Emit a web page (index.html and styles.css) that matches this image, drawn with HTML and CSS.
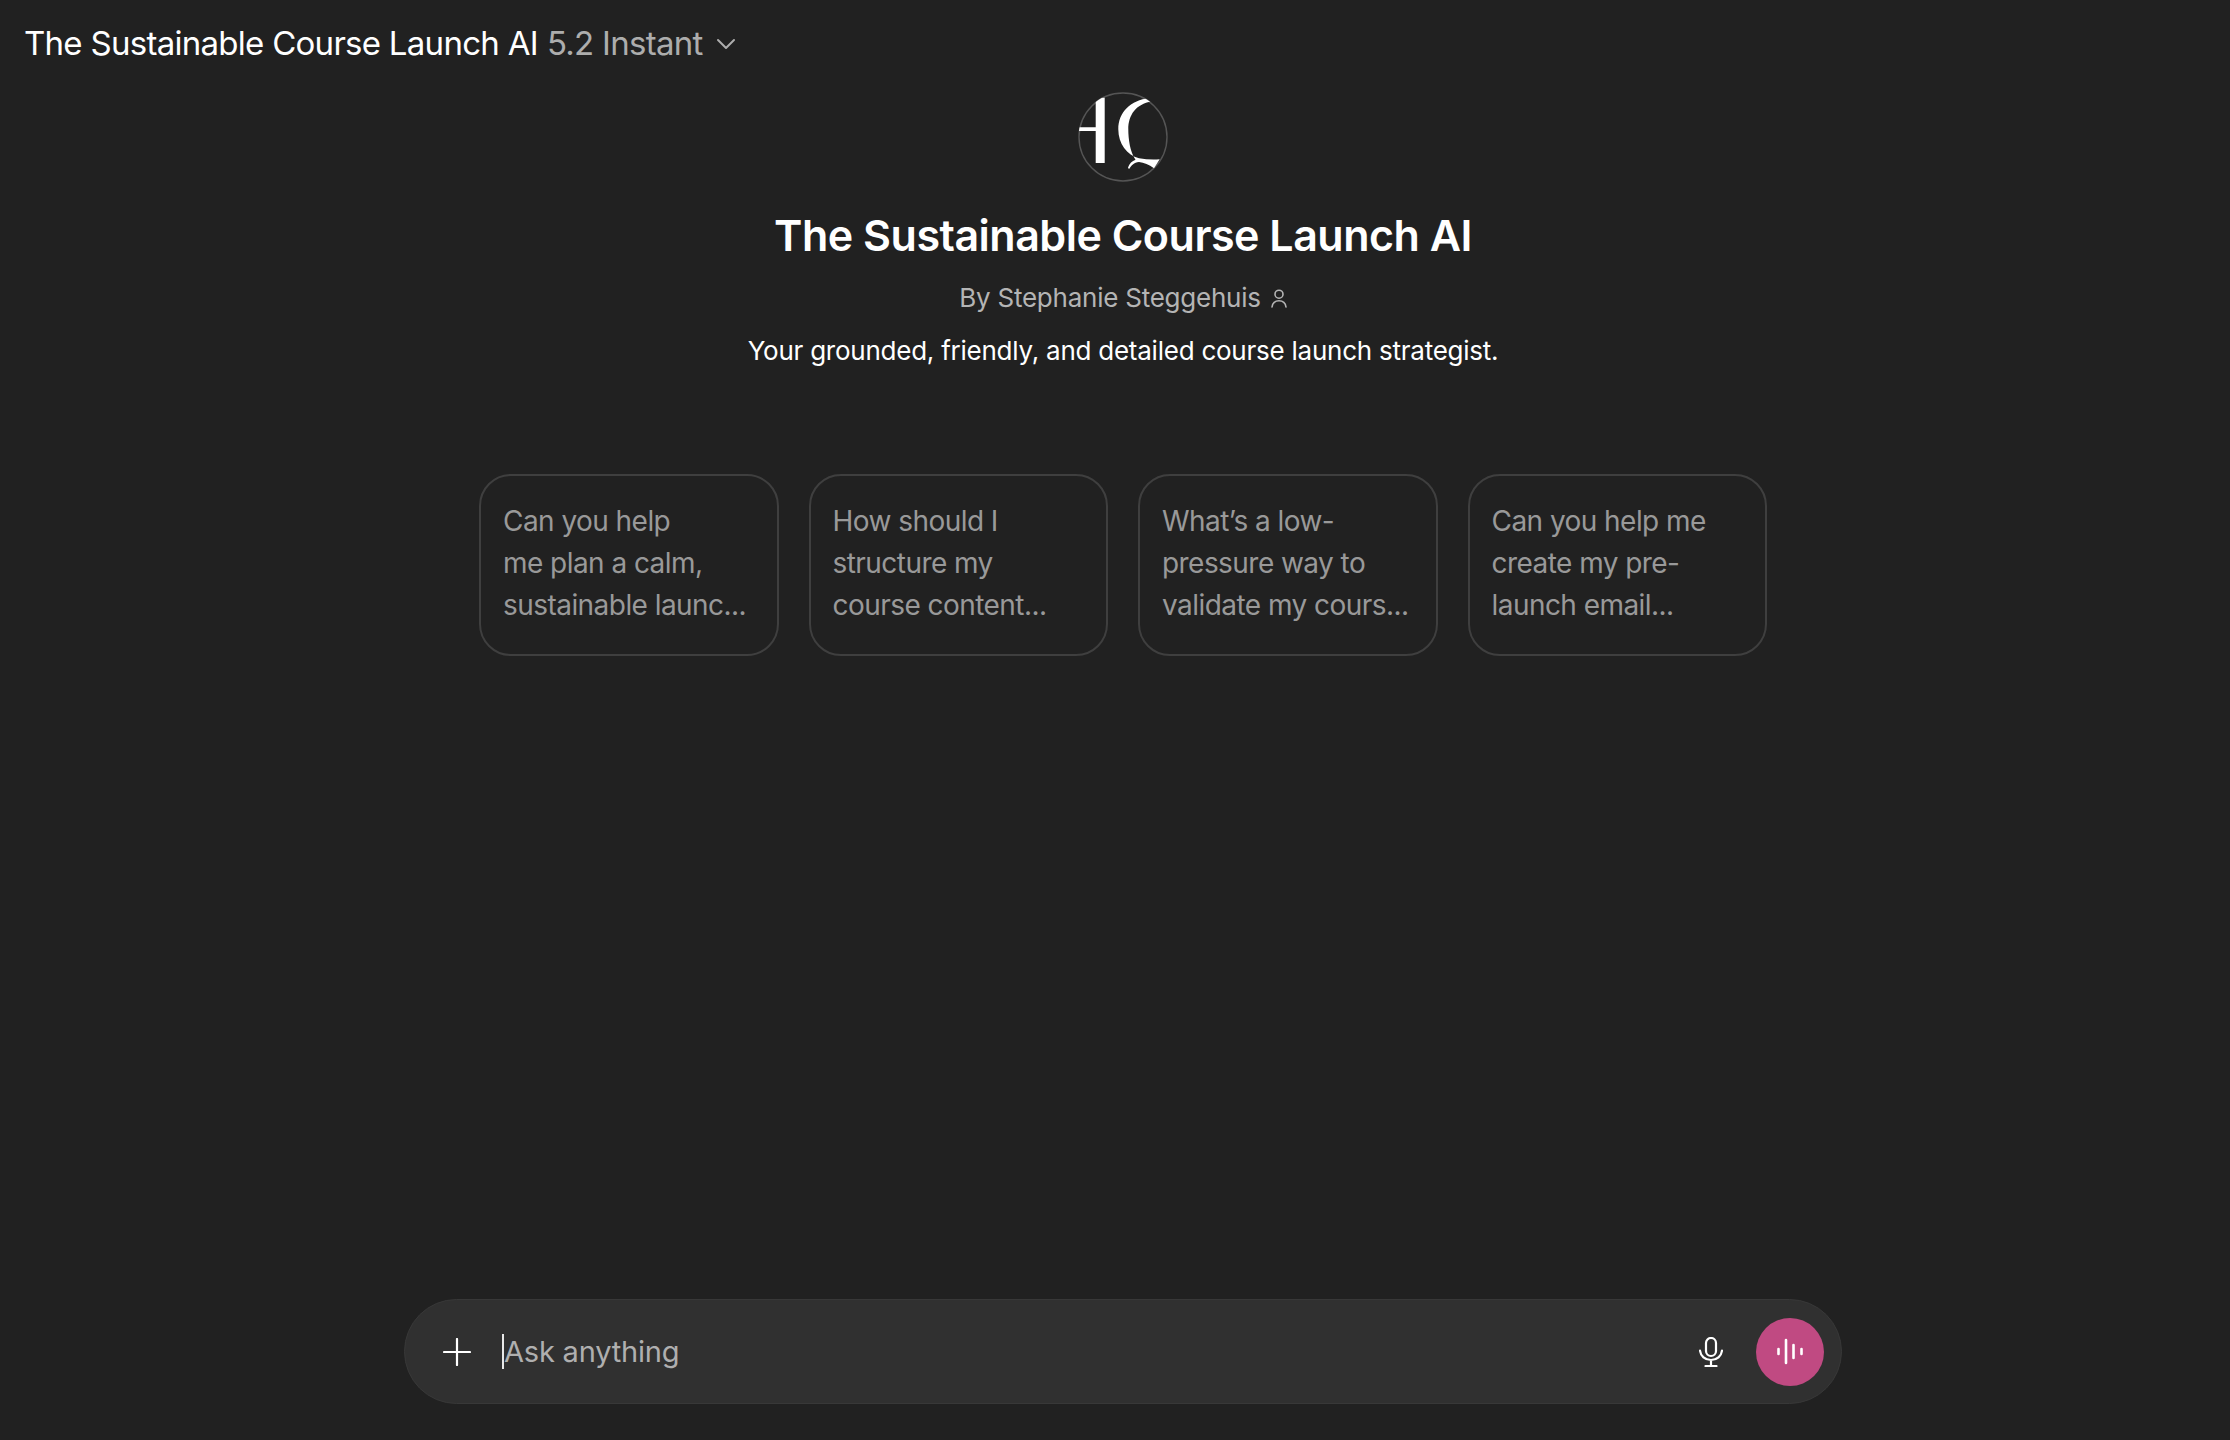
FILE: index.html
```html
<!DOCTYPE html>
<html lang="en">
<head>
<meta charset="utf-8">
<title>The Sustainable Course Launch AI</title>
<link rel="stylesheet" href="styles.css">
</head>
<body>
<header class="topbar">
  <span class="model-name">The Sustainable Course Launch AI</span>
  <span class="model-version">5.2 Instant</span>
  <svg class="chevron" viewBox="0 0 20 12" fill="none" stroke="#adadad" stroke-width="2" stroke-linecap="round" stroke-linejoin="round"><path d="M2 2l8 8 8-8"/></svg>
</header>
<main class="intro">
  <div class="logo">
    <svg viewBox="0 0 90 90" width="90" height="90">
      <defs><clipPath id="logo-clip"><circle cx="45" cy="45" r="44.5"/></clipPath></defs>
      <circle cx="45" cy="45" r="44" fill="none" stroke="#555" stroke-width="1.4"/>
      <g clip-path="url(#logo-clip)" fill="#fff">
        <path d="M0 35.3H17.7V5.7H26.7V71H17.7V39H0Z"/>
        <path d="M71 6.300C53 8 40.300 20 40.300 37.300C40.300 52 49 63 61 66.300C68 67.500 75 67.800 81.700 67.300L76 76.300C71 72.500 66 70.500 61 70C56 70.500 53 73.500 51 77.300L50 75.500C51.500 71.500 54 69 57.500 67.800C52 60 50.300 47 50.300 37.300C50.300 23 58 12 73.500 9.500Z"/>
      </g>
    </svg>
  </div>
  <h1 class="title">The Sustainable Course Launch AI</h1>
  <div class="byline">
    <span>By Stephanie Steggehuis</span>
    <svg class="person" viewBox="0 0 16 19" fill="none" stroke="#b4b4b4" stroke-width="1.6" stroke-linecap="round"><circle cx="8" cy="5.200" r="4"/><path d="M1 18C1.600 14 4.200 11.800 8 11.800s6.400 2.200 7 6.200"/></svg>
  </div>
  <p class="tagline">Your grounded, friendly, and detailed course launch strategist.</p>
  <div class="starters">
    <div class="starter"><p>Can you help<br>me plan a calm,<br>sustainable launc...</p></div>
    <div class="starter"><p>How should I<br>structure my<br>course content...</p></div>
    <div class="starter"><p>What’s a low-<br>pressure way to<br>validate my cours...</p></div>
    <div class="starter"><p>Can you help me<br>create my pre-<br>launch email...</p></div>
  </div>
</main>
<footer class="composer-wrap">
  <div class="composer">
    <svg class="plus" viewBox="0 0 28 28" fill="none" stroke="#fff" stroke-width="2.200" stroke-linecap="round"><path d="M14 1v26M1 14h26"/></svg>
    <div class="field"><span class="caret"></span><span class="placeholder">Ask anything</span></div>
    <svg class="mic" viewBox="0 0 24 30" fill="none" stroke="#fff" stroke-width="2.200" stroke-linecap="round"><rect x="7" y="1" width="10" height="18" rx="5"/><path d="M1 13.500c.6 5.800 5 9.500 11 9.500s10.400-3.700 11-9.500M12 23v5.500M6.500 29h11"/></svg>
    <button class="voice" type="button" aria-label="Voice">
      <svg viewBox="0 0 28 28" width="28" height="28" fill="none" stroke="#fff" stroke-width="2.600" stroke-linecap="round"><path d="M2.500 11v5M10 2v23M17.500 7v13M25.500 11v5"/></svg>
    </button>
  </div>
</footer>
</body>
</html>
```
FILE: styles.css
```css
* { box-sizing: border-box; }
html, body { height: 100%; }
body {
  margin: 0;
  height: 1440px;
  overflow: hidden;
  display: flex;
  flex-direction: column;
  background: #212121;
  color: #fff;
  font-family: Inter, "Noto Sans", sans-serif;
}
.topbar {
  height: 86px;
  display: flex;
  align-items: center;
  padding-left: 24px;
  font-size: 33px;
  letter-spacing: -0.72px;
}
.model-version { margin-left: 9px; color: #adadad; }
.chevron { width: 20px; height: 12px; margin-left: 13px; margin-top: 2px; }
.intro {
  display: flex;
  flex-direction: column;
  align-items: center;
  padding-left: 16px;
  padding-top: 6px;
}
.logo { width: 90px; height: 90px; }
.logo svg { display: block; }
.title {
  margin: 26px 0 0;
  font-size: 43px;
  line-height: 54px;
  font-weight: 600;
  letter-spacing: -0.5px;
}
.byline {
  margin-top: 19px;
  display: flex;
  align-items: center;
  gap: 10px;
  font-size: 26px;
  line-height: 34px;
  letter-spacing: -0.24px;
  color: #b4b4b4;
  transform: none;
}
.person { width: 16px; height: 19px; }
.tagline {
  margin: 19px 0 0;
  font-size: 26px;
  line-height: 34px;
  letter-spacing: -0.24px;
}
.starters {
  margin-top: 106px;
  display: flex;
  gap: 30px;
}
.starter {
  width: 299.5px;
  height: 182px;
  padding: 24px 22px;
  border: 2px solid #3f3f3f;
  border-radius: 32px;
  color: #999;
  font-size: 28px;
  line-height: 42px;
  letter-spacing: -0.55px;
  white-space: nowrap;
}
.starter p { margin: 0; }
.composer-wrap {
  margin-top: auto;
  padding: 0 0 36px 16px;
  display: flex;
  justify-content: center;
}
.composer {
  width: 1438px;
  height: 105px;
  padding: 0 17px 0 38px;
  display: flex;
  align-items: center;
  border: 1px solid #383838;
  border-radius: 53px;
  background: #303030;
}
.plus { width: 28px; height: 28px; flex: none; }
.field {
  flex: 1;
  margin-left: 31px;
  display: flex;
  align-items: center;
  gap: 0;
}
.caret { width: 2px; height: 35px; background: #e8e8e8; }
.placeholder { font-size: 29px; letter-spacing: -0.2px; color: #afafaf; }
.mic { width: 24px; height: 30px; flex: none; margin-right: 33px; }
.voice {
  width: 68px;
  height: 68px;
  flex: none;
  display: flex;
  align-items: center;
  justify-content: center;
  padding: 0;
  border: 0;
  border-radius: 50%;
  background: #c04a82;
}
```
